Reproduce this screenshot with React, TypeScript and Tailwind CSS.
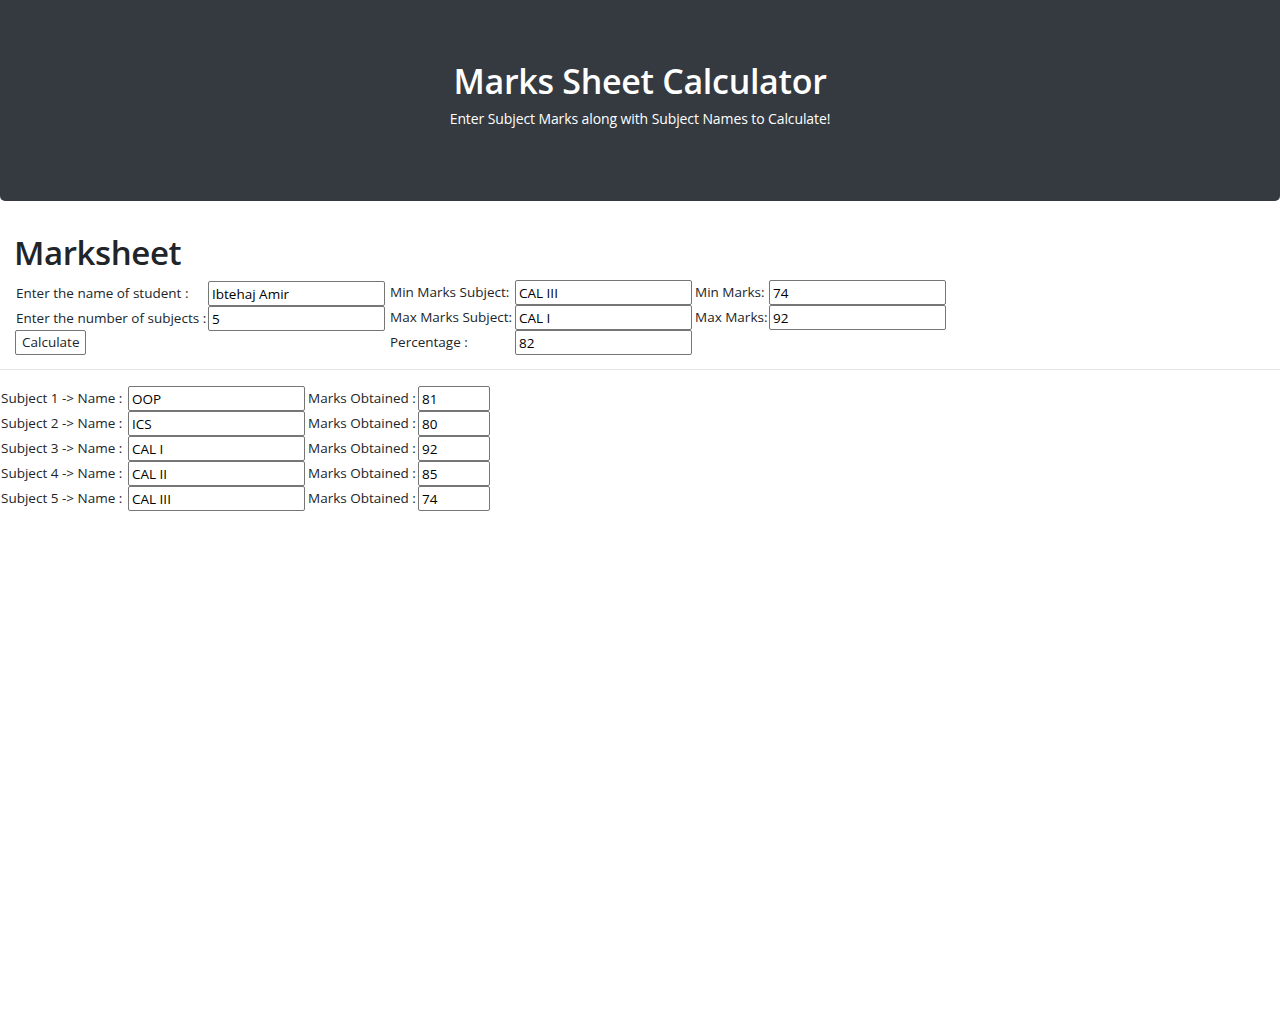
import React from "react";

const subjects = [
  { name: "OOP", marks: "81" },
  { name: "ICS", marks: "80" },
  { name: "CAL I", marks: "92" },
  { name: "CAL II", marks: "85" },
  { name: "CAL III", marks: "74" },
];

function Field({ value, className = "w-[177px]" }: { value: string; className?: string }) {
  return (
    <input
      readOnly
      value={value}
      className={`${className} h-[25px] shrink-0 border border-[#767676] rounded-[2px] px-[3px] text-[13.5px] text-black outline-none bg-white`}
    />
  );
}

export default function App() {
  return (
    <div className="min-h-screen bg-white text-[#212529] font-['Open_Sans',sans-serif] whitespace-nowrap">
      <header className="h-[201px] bg-[#343a40] rounded-b-[5px] flex flex-col items-center pt-[59px]">
        <h1 className="text-[34px] font-semibold leading-[44px] text-white tracking-[-0.3px]">Marks Sheet Calculator</h1>
        <p className="text-[14px] text-white mt-[5px] tracking-[-0.1px]">
          Enter Subject Marks along with Subject Names to Calculate!
        </p>
      </header>

      <section className="px-[15px] pt-[31px]">
        <h2 className="text-[33px] font-semibold leading-[42px] tracking-[-0.4px] -ml-[1px]">Marksheet</h2>
        <div className="mt-[6px] text-[13.5px] text-[#212529] flex">
          <div className="flex flex-col">
            <div className="flex items-center h-[25px] mt-[1px]">
              <span className="w-[193px] pl-[1px]">Enter the name of student :</span>
              <Field value="Ibtehaj Amir" />
            </div>
            <div className="flex items-center h-[25px]">
              <span className="w-[193px] pl-[1px]">Enter the number of subjects :</span>
              <Field value="5" />
            </div>
            <div className="h-[25px] mt-[-1px]">
              <button className="h-[25px] px-[6px] border border-[#767676] rounded-[2px] bg-white text-[13.5px]">
                Calculate
              </button>
            </div>
          </div>
          <div className="flex flex-col ml-[5px]">
            <div className="flex items-center h-[25px]">
              <span className="w-[125px]">Min Marks Subject:</span>
              <Field value="CAL III" />
              <span className="w-[74px] ml-[3px]">Min Marks:</span>
              <Field value="74" />
            </div>
            <div className="flex items-center h-[25px]">
              <span className="w-[125px]">Max Marks Subject:</span>
              <Field value="CAL I" />
              <span className="w-[74px] ml-[3px]">Max Marks:</span>
              <Field value="92" />
            </div>
            <div className="flex items-center h-[25px]">
              <span className="w-[125px]">Percentage :</span>
              <Field value="82" />
            </div>
          </div>
        </div>
      </section>

      <hr className="mt-[14px] border-t border-[#e5e5e5]" />

      <section className="pt-[16px] text-[13.5px] flex flex-col">
        {subjects.map((s, i) => (
          <div key={i} className="flex items-center h-[25px]">
            <span className="w-[128px] pl-[1px]">Subject {i + 1} -&gt; Name :</span>
            <Field value={s.name} />
            <span className="w-[113px] pl-[3px]">Marks Obtained :</span>
            <Field value={s.marks} className="w-[72px]" />
          </div>
        ))}
      </section>
    </div>
  );
}
